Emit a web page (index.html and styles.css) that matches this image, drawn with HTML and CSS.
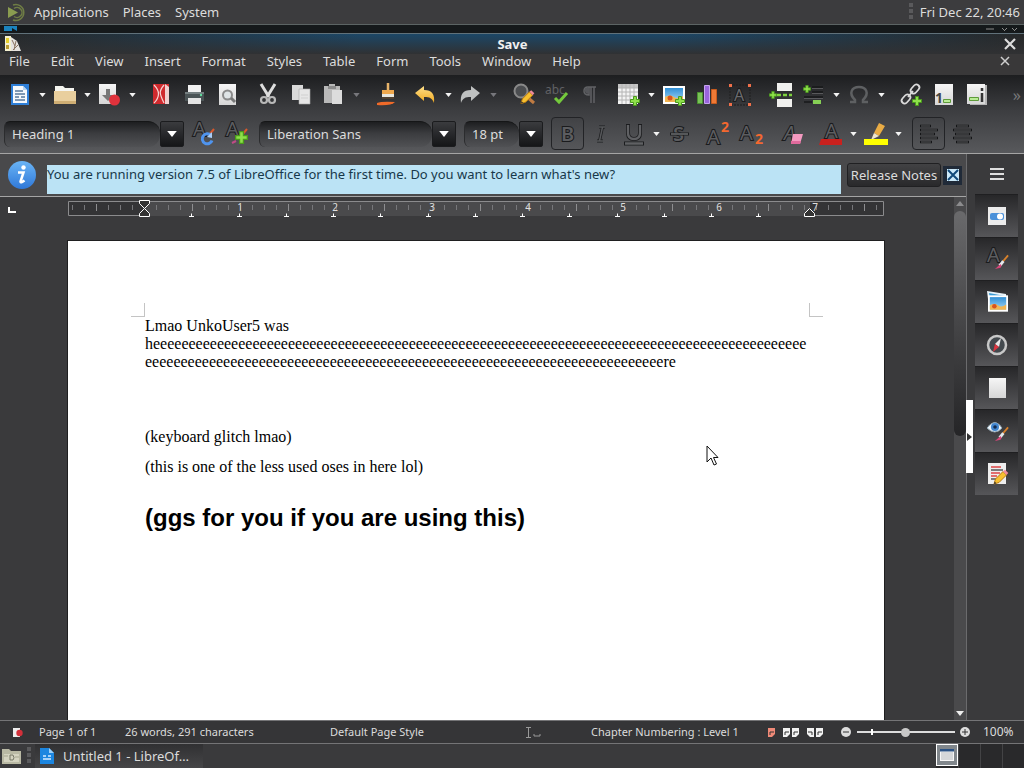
FILE: index.html
```html
<!DOCTYPE html>
<html lang="en">
<head>
<meta charset="utf-8">
<title>Untitled 1 - LibreOffice Writer</title>
<link rel="stylesheet" href="styles.css">
</head>
<body>
<svg class="defs" aria-hidden="true">
  <defs>
    <linearGradient id="paper" x1="0" y1="0" x2="0" y2="1"><stop offset="0" stop-color="#f6f6f6"/><stop offset="1" stop-color="#d6d6d6"/></linearGradient>
    <linearGradient id="gold" x1="0" y1="0" x2="0" y2="1"><stop offset="0" stop-color="#ffe08a"/><stop offset="1" stop-color="#f0a91e"/></linearGradient>
    <linearGradient id="sky" x1="0" y1="0" x2="0" y2="1"><stop offset="0" stop-color="#2f8fd6"/><stop offset="1" stop-color="#a8d8f4"/></linearGradient>
    <linearGradient id="blue" x1="0" y1="0" x2="0" y2="1"><stop offset="0" stop-color="#6ab4f5"/><stop offset="1" stop-color="#2f78d8"/></linearGradient>
  </defs>
  <symbol id="down" viewBox="0 0 8 5"><path d="M0 0h8L4 5z" fill="currentColor"/></symbol>
  <symbol id="plus" viewBox="0 0 10 10"><path d="M3.5.5h3v3h3v3h-3v3h-3v-3h-3v-3h3z" fill="#8ee04a" stroke="#4a9a1c"/></symbol>
  <symbol id="brush" viewBox="0 0 16 16"><path d="M15 1 9 8" stroke="#d9822b" stroke-width="2"/><path d="M10 7 6 12" stroke="#e4e8ec" stroke-width="3"/><path d="M7 10 1 15.500l6-1.500 1-2z" fill="#d8467a"/></symbol>
  <symbol id="pencil" viewBox="0 0 16 16"><path d="M1 15l1.500-5L10 2.500l3.500 3.500L6 13.500z" fill="#f7c030" stroke="#b9790f"/><path d="M10 2.500 12 .8l3.300 3.300L13.500 6z" fill="#f08a9a"/><path d="M1 15l.7-2.500 1.700 1.700z" fill="#333"/></symbol>
  <symbol id="picture" viewBox="0 0 22 18"><path d="M0 0h22v18H0z" fill="#fff"/><path d="M2 2h18v14H2z" fill="url(#sky)"/><path d="M2 11q5-3 9 0t9-1v6H2z" fill="#f2b552"/><circle cx="7" cy="12" r="2.500" fill="#d9541e"/></symbol>
  <symbol id="flag" viewBox="0 0 7 9"><path d="M0 0h7v6L4 9H0z" fill="currentColor"/><path d="M2 4h4M2 4v3" stroke="#333" fill="none"/></symbol>
</svg>

<header class="panel">
  <svg class="logo" viewBox="0 0 22 22"><path d="M4 6v11l10-5.500z" fill="#8a9c50"/><path d="M9 4a8 8 0 1 1 0 15M10 7.500a5 5 0 1 1 0 8" fill="none" stroke="#6f7d45" stroke-width="1.500"/></svg>
  <nav class="panel-menu"><a href="#">Applications</a><a href="#">Places</a><a href="#">System</a></nav>
  <span class="grip"></span>
  <time class="clock">Fri Dec 22, 20:46</time>
</header>

<div class="backstrip">
  <svg class="blue-bit" viewBox="0 0 13 5"><path d="M0 0h13v5L8 2v3H0z" fill="#1b83bd"/></svg>
  <svg class="strip-buttons" viewBox="0 0 32 4"><path d="M0 2h8M16 1l3 3M26 1l3 3M21 1l-2 2M31 1l-2 2" stroke="#8b8b8b" stroke-width="1"/></svg>
</div>
<div class="titlebar">
  <svg class="app" viewBox="0 0 16 16"><path d="M0 0h6v15H0z" fill="#f4f0d0"/><path d="M1 2h3v5H1z" fill="#e7cf2d"/><path d="M1 9h3v4H1z" fill="#b89a30"/><path d="M6 1l6 4 4 10H6z" fill="#e6e3df"/><path d="M7 4l3 6M11 5l-2 9M13 9l-5 5" stroke="#8a7460"/></svg>
  <h1>Save</h1>
  <button class="close" aria-label="Close window"><svg viewBox="0 0 12 12"><path d="M1 1l10 10M11 1 1 11" stroke="#dcdcdc" stroke-width="2.200"/></svg></button>
</div>
<nav class="menubar">
  <button>File</button><button>Edit</button><button>View</button><button>Insert</button><button>Format</button><button>Styles</button><button>Table</button><button>Form</button><button>Tools</button><button>Window</button><button>Help</button>
  <button class="doc-close" aria-label="Close document"><svg viewBox="0 0 10 10"><path d="M1 1l8 8M9 1 1 9" stroke="#cfcfcf" stroke-width="1.500"/></svg></button>
</nav>

<div class="toolbars">
<div class="toolbar" role="toolbar" aria-label="Standard">
  <button class="tool" aria-label="New"><svg viewBox="0 0 24 24"><path d="M3 1h18v21H3z" fill="#2e7fd8"/><path d="M5 3h10l4 4v13H5z" fill="#f4f8fc"/><path d="M15 3v4h4" fill="#b8d4ef"/><path d="M7 8h8M7 11h10M7 14h4M7 17h10M13 14h4" stroke="#56789c" stroke-width="1.500"/></svg></button><button class="drop" aria-label="New options"><svg><use href="#down"/></svg></button>
  <button class="tool" aria-label="Open"><svg viewBox="0 0 24 24"><path d="M2 3h8l2 2h9v5H2z" fill="#f5f5f0"/><path d="M1 8h22v13H1z" fill="#e9cf9e"/><path d="M1 18h22v3H1z" fill="#cfae74"/></svg></button><button class="drop" aria-label="Open options"><svg><use href="#down"/></svg></button>
  <button class="tool" aria-label="Save"><svg viewBox="0 0 24 24"><path d="M1 1h17v20H1z" fill="url(#paper)"/><path d="M8 6h4v6h4l-6 6-6-6h4z" fill="#777"/><circle cx="16.500" cy="17" r="5.500" fill="#e0323c"/></svg></button><button class="drop" aria-label="Save options"><svg><use href="#down"/></svg></button>
  <span class="sep small"></span>
  <button class="tool" aria-label="Export as PDF"><svg viewBox="0 0 24 24"><path d="M4 1h16v20H4z" fill="#d02a2e"/><path d="M16 1l4 3v17h-4z" fill="#f0cfcf"/><path d="M5 2c6 6 6 12 0 18M15 2c-5 6-5 8 0 18" fill="none" stroke="#f4d4d4" stroke-width="1.200"/></svg></button>
  <button class="tool" aria-label="Print"><svg viewBox="0 0 24 24"><path d="M6 2h13v9H6z" fill="#f1f1f1"/><path d="M3 9h19v9H3z" fill="#4a5355"/><path d="M3 9h19v2H3z" fill="#747e80"/><circle cx="19" cy="12" r="1.200" fill="#5fdc9c"/><path d="M6 15h13v6H6z" fill="#e3e3e3"/></svg></button>
  <button class="tool" aria-label="Print preview"><svg viewBox="0 0 24 24"><path d="M4 1h17v21H4z" fill="url(#paper)"/><circle cx="12.500" cy="12" r="4.500" fill="#dfe4e6" stroke="#8b8b8b" stroke-width="2"/><path d="m16 15 4 4" stroke="#777" stroke-width="3"/></svg></button>
  <span class="sep"></span>
  <button class="tool" aria-label="Cut"><svg viewBox="0 0 24 24"><path d="M5 1l8 13M19 1l-8 13" stroke="#dedede" stroke-width="3"/><circle cx="8" cy="17" r="3" fill="none" stroke="#b9b9b9" stroke-width="2.200"/><circle cx="16" cy="17" r="3" fill="none" stroke="#b9b9b9" stroke-width="2.200"/></svg></button>
  <button class="tool" aria-label="Copy"><svg viewBox="0 0 24 24"><path d="M3 2h11v15H3z" fill="#d9d9d9"/><path d="M10 6h11v15H10z" fill="#e6e6e6" stroke="#aaa" stroke-width=".6"/><path d="M12 12h7M12 15h7" stroke="#d0d0d0"/></svg></button>
  <button class="tool" aria-label="Paste"><svg viewBox="0 0 24 24"><path d="M2 3h5V1h6v2h5v17H2z" fill="#b9b9b9"/><path d="M6 3h8v3H6z" fill="#8c8c8c"/><path d="M10 7h10v14H10z" fill="#dcdcdc"/></svg></button><button class="drop dim" aria-label="Paste options"><svg><use href="#down"/></svg></button>
  <span class="sep"></span>
  <button class="tool" aria-label="Clone formatting"><svg viewBox="0 0 24 24"><path d="M13 0v8" stroke="#e8b46a" stroke-width="2.500"/><path d="M7 7h12v5H7z" fill="#efa84e"/><path d="M7 11h12v4H7z" fill="#e8e6df"/><path d="M7 14h12v2H7z" fill="#504030"/><path d="M2 20q5-2 18-1-4 4-18 3z" fill="#ef6a29"/></svg></button>
  <span class="sep small"></span>
  <button class="tool" aria-label="Undo"><svg viewBox="0 0 24 24"><path d="M1 10 10 3v4c8 0 11 4 10 13-2-5-4-6-10-6v4z" fill="url(#gold)"/></svg></button><button class="drop" aria-label="Undo options"><svg><use href="#down"/></svg></button>
  <button class="tool" aria-label="Redo"><svg viewBox="0 0 24 24"><path d="m21 10-9-7v4C4 7 1 11 2 20c2-5 4-6 10-6v4z" fill="#bfc1c1"/></svg></button><button class="drop dim" aria-label="Redo options"><svg><use href="#down"/></svg></button>
  <span class="sep"></span>
  <button class="tool" aria-label="Find and replace"><svg viewBox="0 0 24 24"><circle cx="9" cy="8" r="6.500" fill="#4b4d50" stroke="#898989" stroke-width="2"/><path d="m14 13 8 7" stroke="#c07b42" stroke-width="3"/><use href="#pencil" x="8" y="6" width="15" height="16"/></svg></button>
  <button class="tool" aria-label="Spelling"><svg viewBox="0 0 24 24"><text x="0" y="11" class="abc">abc</text><path d="m10 15 4 4 8-9" fill="none" stroke="#74c93c" stroke-width="3"/></svg></button>
  <button class="tool" aria-label="Formatting marks"><svg viewBox="0 0 24 24"><path d="M18 4H10q-4 0-4 4t5 4V4M13 4v16M16 4v16" fill="none" stroke="#616265" stroke-width="1.500"/><path d="M7 5h4v6q-4 0-4-3z" fill="#55565a"/></svg></button>
  <span class="sep small"></span>
  <button class="tool" aria-label="Insert table"><svg viewBox="0 0 24 24"><path d="M1 1h20v20H1z" fill="#f3f3f3"/><path d="M1 1h20v4H1z" fill="#c4c4c4"/><path d="M1 5h20M1 9h20M1 13h20M1 17h20M5 1v20M9 1v20M13 1v20M17 1v20" stroke="#b4b4b4"/><use href="#plus" x="13" y="13" width="10" height="10"/></svg></button><button class="drop" aria-label="Table size"><svg><use href="#down"/></svg></button>
  <button class="tool" aria-label="Insert image"><svg viewBox="0 0 24 24"><use href="#picture" x="1" y="3" width="22" height="18"/><use href="#plus" x="13" y="13" width="10" height="10"/></svg></button>
  <button class="tool" aria-label="Insert chart"><svg viewBox="0 0 24 24"><path d="M2.500 9.500h5v11h-5z" fill="#79c257" stroke="#4b9430"/><path d="M9.500 2.500h5v18h-5z" fill="#9a66dc" stroke="#c6a4f0"/><path d="M16.500 6.500h5v14h-5z" fill="#ef7a36" stroke="#c85a1c"/></svg></button>
  <button class="tool" aria-label="Insert text box"><svg viewBox="0 0 24 24"><path d="M2 2h20v20H2z" fill="none" stroke="#1f1f1f" stroke-dasharray="2 1"/><path d="M1 1h3v3H1zM20 1h3v3h-3zM1 20h3v3H1zM20 20h3v3h-3z" fill="#f0704a"/><text x="6" y="18" class="glyph mid">A</text></svg></button>
  <span class="sep"></span>
  <button class="tool" aria-label="Page break"><svg viewBox="0 0 24 24"><path d="M8 0h15v8H8zM8 16h15v8H8z" fill="#f0f0ee"/><path d="M8 12h15" stroke="#7fd33f" stroke-width="2.500" stroke-dasharray="4 2"/><use href="#plus" x="0" y="8" width="8" height="8"/></svg></button>
  <button class="tool" aria-label="Insert field"><svg viewBox="0 0 24 24"><path d="M10 4h11M10 9h11M2 14h19M2 19h8" stroke="#17181a" stroke-width="1.500"/><path d="M10 5.500h11M10 10.500h11M2 15.500h19" stroke="#6b6c6f" stroke-width=".7"/><path d="M11 17h8v4h-8z" fill="#86cf55"/><use href="#plus" x="1" y="2" width="8" height="8"/></svg></button><button class="drop" aria-label="Field options"><svg><use href="#down"/></svg></button>
  <button class="tool" aria-label="Special character"><svg viewBox="0 0 24 24"><path d="M3 19h5v-2c-7-7-3-13 4-13s11 6 4 13v2h5" fill="none" stroke="#5e6062" stroke-width="2.500"/></svg></button><button class="drop" aria-label="Character options"><svg><use href="#down"/></svg></button>
  <span class="sep"></span>
  <button class="tool" aria-label="Insert hyperlink"><svg viewBox="0 0 24 24"><g fill="none" stroke="#dadada" stroke-width="1.800"><rect x="1" y="13" width="10" height="6" rx="3" transform="rotate(-48 6 16)"/><rect x="10" y="3" width="10" height="6" rx="3" transform="rotate(-48 15 6)"/><path d="m8 14 5-6"/></g><use href="#plus" x="12" y="13" width="10" height="10"/></svg></button>
  <button class="tool" aria-label="Insert footnote"><svg viewBox="0 0 24 24"><path d="M2 1h18v21H2z" fill="url(#paper)"/><text x="2" y="20" class="one">1</text><path d="M10.500 16.500h7v3h-7z" fill="#b9ec96" stroke="#5f9b3b"/></svg></button>
  <button class="tool" aria-label="Insert endnote"><svg viewBox="0 0 24 24"><path d="M4 2h17v20H4z" fill="#b5b5b5"/><path d="M1 1h18v20H1z" fill="url(#paper)"/><path d="M3.500 14.500h9v3h-9z" fill="#b9ec96" stroke="#5f9b3b"/><path d="M16 5v3M16 10v9" stroke="#333" stroke-width="2.500"/></svg></button>
  <button class="more" aria-label="More tools">»</button>
</div>

<div class="toolbar format" role="toolbar" aria-label="Formatting">
  <div class="combo style"><input aria-label="Paragraph style" value="Heading 1"><button aria-label="Show styles"><svg><use href="#down"/></svg></button></div>
  <button class="tool" aria-label="Update style"><svg viewBox="0 0 24 24"><text x="1" y="14" class="glyph big">A</text><path d="m22 7-5 6" stroke="#d9582b" stroke-width="2"/><path d="M19 13.500a5 5 0 1 0 1 5" fill="none" stroke="#4f94ee" stroke-width="3"/><path d="m15 15 5-5v6z" fill="#a9cdf8"/></svg></button>
  <button class="tool" aria-label="New style"><svg viewBox="0 0 24 24"><text x="1" y="14" class="glyph big">A</text><path d="m22 7-5 6" stroke="#d9582b" stroke-width="2"/><path d="m7 21 4-2" stroke="#c14b86" stroke-width="2"/><use href="#plus" x="10" y="9" width="13" height="13"/></svg></button>
  <span class="sep small"></span>
  <div class="combo font"><input aria-label="Font name" value="Liberation Sans"><button aria-label="Show fonts"><svg><use href="#down"/></svg></button></div>
  <span class="sep"></span>
  <div class="combo size"><input aria-label="Font size" value="18 pt"><button aria-label="Show sizes"><svg><use href="#down"/></svg></button></div>
  <span class="sep"></span>
  <button class="tool on" aria-label="Bold"><svg viewBox="0 0 24 24"><text x="5" y="19" class="glyph bold">B</text></svg></button>
  <button class="tool" aria-label="Italic"><svg viewBox="0 0 24 24"><path d="M10 5h6M8 19h6M13.500 5l-3 14" stroke="#1b1c1e" stroke-width="3"/><path d="M10 5h6M8 19h6M13.500 5l-3 14" stroke="#56575a" stroke-width="1.500"/></svg></button>
  <button class="tool" aria-label="Underline"><svg viewBox="0 0 24 24"><path d="M6 2v9q0 6 6 6t6-6V2M2 21.500h20" fill="none" stroke="#1b1c1e" stroke-width="4"/><path d="M6 3v8q0 6 6 6t6-6V3M3 21.500h18" fill="none" stroke="#5f6063" stroke-width="2.400"/></svg></button><button class="drop" aria-label="Underline options"><svg><use href="#down"/></svg></button>
  <button class="tool" aria-label="Strikethrough"><svg viewBox="0 0 24 24"><text x="6" y="19" class="glyph bold">S</text><path d="M3 12h19" stroke="#1b1c1e" stroke-width="3"/><path d="M4 12h17" stroke="#6b6c6f" stroke-width="1.500"/></svg></button>
  <span class="sep small"></span>
  <button class="tool" aria-label="Superscript"><svg viewBox="0 0 24 24"><text x="1" y="22" class="glyph big">A</text><text x="15" y="10" class="two">2</text></svg></button>
  <button class="tool" aria-label="Subscript"><svg viewBox="0 0 24 24"><text x="1" y="18" class="glyph big">A</text><text x="16" y="22" class="two">2</text></svg></button>
  <span class="sep"></span>
  <button class="tool" aria-label="Clear formatting"><svg viewBox="0 0 24 24"><text x="4" y="18" class="glyph slant">A</text><path d="m13 12h10l-3 10h-9z" fill="#f49ac1"/><path d="m11 19h10l-1 3h-9z" fill="#e06a9c"/></svg></button>
  <span class="sep small"></span>
  <button class="tool" aria-label="Font color"><svg viewBox="0 0 24 24"><text x="6" y="16" class="glyph big">A</text><path d="M2 17h21v6H0z" fill="#c9211e"/></svg></button><button class="drop" aria-label="Font colors"><svg><use href="#down"/></svg></button>
  <button class="tool" aria-label="Highlighting"><svg viewBox="0 0 24 24"><path d="m15 1 6 3-6 10-5-3z" fill="#e9ac45"/><path d="m10 11 5 3-8 4z" fill="#eee4ce"/><path d="M0 17h24v6H0z" fill="#ff0"/></svg></button><button class="drop" aria-label="Highlight colors"><svg><use href="#down"/></svg></button>
  <span class="sep"></span>
  <button class="tool on" aria-label="Align left"><svg viewBox="0 0 24 24"><path d="M3 4h11M3 8h18M3 12h15M3 16h18M3 20h12" stroke="#141517" stroke-width="2.500"/><path d="M4 4h9M4 8h16M4 12h13M4 16h16M4 20h10" stroke="#5b5c5f" stroke-width="1.200"/></svg></button>
  <button class="tool" aria-label="Center"><svg viewBox="0 0 24 24"><path d="M6 4h13M3 8h19M5 12h15M3 16h19M6 20h13" stroke="#141517" stroke-width="2.500"/><path d="M7 4h11M4 8h17M6 12h13M4 16h17M7 20h11" stroke="#5b5c5f" stroke-width="1.200"/></svg></button>
</div>
</div>

<div class="workspace">
  <main class="editor">
    <div class="infobar">
      <svg class="info" viewBox="0 0 28 28"><circle cx="14" cy="14" r="14" fill="url(#blue)"/><circle cx="15.500" cy="6.500" r="2.200" fill="#fff"/><path d="M10 11.500h5.500l-3 9q0 2 4-1" fill="none" stroke="#fff" stroke-width="2.500"/></svg>
      <p>You are running version 7.5 of LibreOffice for the first time. Do you want to learn what's new?</p>
      <button class="notes">Release Notes</button>
      <button class="dismiss" aria-label="Close infobar"><svg viewBox="0 0 12 12"><path d="M0 0h12v12H0z" fill="#cdeafa"/><path d="m1 1 10 10M11 1 1 11" stroke="#124a7a" stroke-width="2"/></svg></button>
    </div>
    <div class="view">
      <div class="canvas">
        <div class="ruler">
          <svg class="tabtype" viewBox="0 0 8 8"><path d="M1 1v5h7" fill="none" stroke="#fff" stroke-width="2"/></svg>
          <svg class="scale" viewBox="0 0 816 20">
            <defs><pattern id="ticks" x="4" width="12" height="20" patternUnits="userSpaceOnUse"><path d="M.5 6v5" stroke="#77777a"/></pattern></defs>
            <path d="M.5 2.500h815v14H.500z" fill="#343436" stroke="#8b8b8d"/>
            <path d="M76 3h666v14H76z" fill="#4a4a4c"/>
            <path d="M1 0h814v20H1z" fill="url(#ticks)"/>
            <path d="M28.500 5v7M124.500 5v7M220.500 5v7M316.500 5v7M412.500 5v7M508.500 5v7M604.500 5v7M700.500 5v7M796.500 5v7" stroke="#8e8e90"/>
            <g class="numbers"><text x="172" y="12">1</text><text x="267" y="12">2</text><text x="364" y="12">3</text><text x="460" y="12">4</text><text x="555" y="12">5</text><text x="651" y="12">6</text><text x="747" y="12">7</text></g>
            <path d="M121 17.500h5m-2.500 0v-3M169 17.500h5m-2.500 0v-3M216 17.500h5m-2.500 0v-3M263 17.500h5m-2.500 0v-3M310 17.500h5m-2.500 0v-3M358 17.500h5m-2.500 0v-3M405 17.500h5m-2.500 0v-3M452 17.500h5m-2.500 0v-3M499 17.500h5m-2.500 0v-3M547 17.500h5m-2.500 0v-3M594 17.500h5m-2.500 0v-3M641 17.500h5m-2.500 0v-3M688 17.500h5m-2.500 0v-3" fill="none" stroke="#fff"/>
            <path d="M71.500 1.500h10v3l-5 5-5-5zM71.500 17.500h10v-3l-5-5-5 5zM736.500 17.500h10v-3l-5-5-5 5z" fill="#333" stroke="#fff"/>
          </svg>
        </div>
        <article class="page">
          <div class="corners"><span class="corner left"></span><span class="corner right"></span></div>
          <p>Lmao UnkoUser5 was h<!--
            -->eeeeeeeeee<!--
            -->eeeeeeeeee<!--
            -->eeeeeeeeee<!--
            -->eeeeeeeeee<!--
            -->eeeeeeeeee<!--
            -->eeeeeeeeee<!--
            -->eeeeeeeeee<!--
            -->eeeeeeeeee<!--
            -->eeeeeeeeee<!--
            -->eeeeeeeeee<!--
            -->eeeeeeeeee<!--
            -->eeeeeeeeee<!--
            -->eeeeeeeeee<!--
            -->eeeeeeeeee<!--
            -->eeeeeeeeee<!--
            -->eeeeeeeeee<!--
            -->eeeeere</p>
          <p><br></p>
          <p>(keyboard glitch lmao)</p>
          <p>(this is one of the less used oses in here lol)</p>
          <h2>(ggs for you if you are using this)</h2>
          <svg class="pointer" viewBox="0 0 13 21"><path d="M1 1v16l4-4 3 7 2.500-1-3-6.500H12z" fill="#fff" stroke="#111"/></svg>
        </article>
      </div>
      <div class="scrollbar"><button aria-label="Scroll up"><svg><use href="#down"/></svg></button><span class="thumb"></span><button aria-label="Scroll down"><svg><use href="#down"/></svg></button></div>
    </div>
  </main>
  <aside class="sidebar">
    <button class="collapse" aria-label="Hide sidebar"><svg viewBox="0 0 5 8"><path d="M0 0v8l5-4z" fill="#333"/></svg></button>
    <button class="burger" aria-label="Sidebar settings"><svg viewBox="0 0 14 14"><path d="M0 2h14M0 7h14M0 12h14" stroke="#dedede" stroke-width="2"/></svg></button>
    <button class="tab" aria-label="Properties"><svg viewBox="0 0 24 24"><path d="M3 3h18v18H3z" fill="#ececec"/><rect x="5" y="9" width="14" height="7" rx="2" fill="#4a90d9"/><circle cx="15" cy="12.500" r="3" fill="#fff"/></svg></button>
    <button class="tab" aria-label="Styles"><svg viewBox="0 0 24 24"><text x="2" y="15" class="glyph big">A</text><use href="#brush" x="9" y="7" width="15" height="16"/></svg></button>
    <button class="tab" aria-label="Gallery"><svg viewBox="0 0 24 24"><path d="m2 1 19 3v5H3z" fill="#e8f2f8"/><path d="m4 3 16 3v3H5z" fill="#3c9bd5"/><use href="#picture" x="3" y="5" width="20" height="17"/></svg></button>
    <button class="tab" aria-label="Navigator"><svg viewBox="0 0 24 24"><circle cx="12" cy="12" r="9" fill="#43494e" stroke="#c8c8c8" stroke-width="2.500"/><path d="m16 5-2 9-4-3z" fill="#e7e7e7"/><path d="m8 19 2-8 4 3z" fill="#dc3540"/></svg></button>
    <button class="tab" aria-label="Page"><svg viewBox="0 0 24 24"><path d="M4 2h17v20H4z" fill="url(#paper)"/></svg></button>
    <button class="tab" aria-label="Style inspector"><svg viewBox="0 0 24 24"><path d="M2 9q8-11 15 0-7 8-15 0z" fill="#eef4f8" stroke="#8ea4b2"/><circle cx="10" cy="8" r="4" fill="#4286cf"/><circle cx="10" cy="8" r="1.800" fill="#142b4e"/><use href="#brush" x="9" y="7" width="15" height="16"/></svg></button>
    <button class="tab" aria-label="Manage changes"><svg viewBox="0 0 24 24"><path d="M3 1h18v21H3z" fill="#eee"/><path d="M6 5h10M6 11h9M6 14h6" stroke="#d44" stroke-width="1.500"/><path d="M6 8h12M6 17h5" stroke="#555" stroke-width="1.500"/><use href="#pencil" x="8" y="7" width="16" height="16"/></svg></button>
  </aside>
</div>

<footer class="status">
  <svg class="modified" viewBox="0 0 10 9"><path d="M0 0h7v9H0z" fill="#eee"/><circle cx="6.500" cy="5" r="3.200" fill="#d3303a"/></svg>
  <span class="pages">Page 1 of 1</span>
  <span class="words">26 words, 291 characters</span>
  <span class="pagestyle">Default Page Style</span>
  <svg class="insert" viewBox="0 0 16 11"><path d="M0 .5h5M0 10.500h5M2.500 0v11M8 7v2h6V7" fill="none" stroke="#999"/></svg>
  <span class="chapter">Chapter Numbering : Level 1</span>
  <div class="views"><button class="red" aria-label="Single page"><svg><use href="#flag"/></svg></button><button aria-label="Multiple pages"><svg><use href="#flag"/></svg><svg><use href="#flag"/></svg></button><button aria-label="Book view"><svg class="flip"><use href="#flag"/></svg><svg><use href="#flag"/></svg></button></div>
  <button class="zoom" aria-label="Zoom out"><svg viewBox="0 0 10 10"><circle cx="5" cy="5" r="5" fill="#ddd"/><path d="M2 5h6" stroke="#333"/></svg></button>
  <input class="slider" type="range" aria-label="Zoom" min="0" max="100" value="49">
  <button class="zoom" aria-label="Zoom in"><svg viewBox="0 0 10 10"><circle cx="5" cy="5" r="5" fill="#ddd"/><path d="M2 5h6M5 2v6" stroke="#333"/></svg></button>
  <span class="percent">100%</span>
</footer>

<div class="taskbar">
  <button class="desktop" aria-label="Show desktop"><svg viewBox="0 0 20 18"><path d="M0 2h7l2 2h10v13H0z" fill="#b9b9a4"/><path d="M2 7h15v8H2z" fill="#d4d3c0"/><path d="M8 8h3q2 3 0 5H8z" fill="none" stroke="#777867"/><path d="M2 9h4M13 10h4" stroke="#a5a58f"/></svg></button>
  <span class="grip"></span>
  <button class="task"><svg viewBox="0 0 14 16"><path d="M0 0h9l5 5v11H0z" fill="#1c86e0"/><path d="M9 0v5h5z" fill="#9bd0fa"/><path d="M3 8h3M8 8h3M3 11h8" stroke="#d5ecff" stroke-width="1.500"/></svg><span>Untitled 1 - LibreOf…</span></button>
  <div class="pager"><button class="current" aria-label="Workspace 1"><svg viewBox="0 0 14 12"><path d="M0 0h14v12H0z" fill="#f6f6f6"/><path d="M1 3h12v8H1z" fill="#d5d7d9"/><path d="M0 0h14v2.500H0z" fill="#2b5284"/></svg></button><button aria-label="Workspace 2"></button><button aria-label="Workspace 3"></button><button aria-label="Workspace 4"></button></div>
</div>
</body>
</html>
```
FILE: styles.css
```css
* { box-sizing: border-box; }
html, body { height: 100%; }
body {
  margin: 0;
  display: flex;
  flex-direction: column;
  overflow: hidden;
  background: #3a3a3c;
  color: #dcdcdc;
  font: 13px/20px "Noto Sans", sans-serif;
}
button { margin: 0; padding: 0; border: 0; background: none; color: inherit; font: inherit; }
input { font: inherit; color: inherit; }
svg { display: block; flex: none; overflow: visible; }
a { color: inherit; text-decoration: none; }
.defs { position: absolute; width: 0; height: 0; }

/* Desktop panel */
.panel { display: flex; align-items: center; height: 25px; flex: none; padding: 0 4px; background: #3c3c3e; border-bottom: 1px solid #5c6464; }
.logo { width: 22px; height: 22px; }
.panel-menu { display: flex; gap: 14px; margin-left: 8px; flex: 1; }
.grip { width: 4px; height: 18px; background: repeating-linear-gradient(#5a5a5c 0 4px, transparent 4px 6px); }
.clock { margin-left: 7px; }

/* Window frame */
.backstrip { display: flex; justify-content: space-between; height: 8px; flex: none; padding: 1px 6px 0 4px; background: #15191b; }
.blue-bit { width: 13px; height: 5px; }
.strip-buttons { width: 32px; height: 6px; }
.titlebar { display: flex; align-items: center; height: 21px; flex: none; padding: 0 8px 0 5px; border-top: 1px solid #60717a; background: linear-gradient(transparent, #303133), linear-gradient(90deg, #262829, #1c4767 35%, #1c4767 65%, #262829); }
.app { width: 16px; height: 16px; }
.titlebar h1 { flex: 1; margin: 0; text-align: center; font-size: 13px; line-height: 20px; color: #f0f0f0; }
.close svg { width: 12px; height: 12px; }
.menubar { display: flex; align-items: center; gap: 21px; height: 21px; flex: none; padding: 0 14px 7px 9px; background: #393839; }
.doc-close { margin-left: auto; }
.doc-close svg { width: 10px; height: 10px; }

/* Toolbars */
.toolbars { flex: none; height: 79px; border-bottom: 1px solid #a5a5a5; background: linear-gradient(#1d1e20, #3c3d40 45%, #58595c); }
.toolbar { display: flex; align-items: center; height: 39px; padding-left: 3px; }
.toolbar.format { padding-left: 4px; }
.tool { display: flex; align-items: center; justify-content: center; width: 33px; height: 33px; flex: none; }
.tool svg { width: 24px; height: 24px; }
.tool.on { border: 1px solid #222326; border-radius: 4px; }
.drop { display: flex; align-items: center; justify-content: center; width: 12px; height: 33px; flex: none; color: #f4f4f4; }
.drop svg { width: 7px; height: 4px; }
.drop.dim { color: #77777c; }
.sep { width: 8px; flex: none; }
.sep.small { width: 6px; }
.more { margin-left: auto; margin-right: 3px; color: #77787a; font-size: 16px; }
.abc { font: 12px "Noto Sans", sans-serif; fill: #606164; }
.glyph { font-family: "Noto Sans", sans-serif; font-size: 16px; fill: #5c5d60; stroke: #1a1b1d; stroke-width: 2px; paint-order: stroke; }
.glyph.mid { fill: #6a6b6e; stroke: #1a1b1d; }
.glyph.big { font-size: 20px; }
.glyph.bold { font-size: 20px; font-weight: 600; }
.glyph.slant { font-size: 20px; font-style: italic; }
.one { font: 700 14px "Noto Sans", sans-serif; fill: #444; }
.two { font: 700 14px "Noto Sans", sans-serif; fill: #f4682f; }
.combo { display: flex; flex: none; height: 26px; }
.combo.style { width: 180px; margin-right: 3px; }
.combo.font { width: 197px; }
.combo.size { width: 79px; }
.combo input { flex: 1; min-width: 0; padding: 0 0 0 7px; border: 0; border-top: 1px solid #151617; border-left: 1px solid #2b2c2e; border-radius: 6px 12px 12px 6px; outline: 0; background: linear-gradient(#1d1e20, #3b3c3f 45%, #505154); }
.combo button { display: flex; align-items: center; justify-content: center; width: 24px; border: 1px solid #1b1c1e; border-radius: 2px; background: linear-gradient(#3a3b3e, #151618); color: #fff; }
.combo button svg { width: 10px; height: 6px; }

/* Workspace */
.workspace { display: flex; flex: 1; min-height: 0; }
.editor { display: flex; flex-direction: column; flex: 1; min-width: 0; border-right: 1px solid #6b6b6d; }
.infobar { display: flex; align-items: center; height: 43px; flex: none; padding: 0 4px 0 8px; border-bottom: 1px solid #a5a5a5; background: #49494b; }
.info { width: 28px; height: 28px; }
.infobar p { flex: 1; height: 29px; margin: 8px 6px 0 11px; background: #bbe3f5; color: #17384a; line-height: 18px; white-space: nowrap; }
.notes { width: 94px; height: 24px; border: 1px solid #202022; border-radius: 3px; background: linear-gradient(#424244, #29292b); }
.dismiss { display: flex; align-items: center; justify-content: center; width: 19px; height: 19px; margin-left: 2px; background: #202a38; }
.dismiss svg { width: 12px; height: 12px; }
.view { display: flex; flex: 1; min-height: 0; }
.canvas { display: flex; flex-direction: column; align-items: center; flex: 1; min-width: 0; padding-right: 2px; overflow: hidden; }
.ruler { position: relative; display: flex; justify-content: center; width: 100%; height: 44px; flex: none; padding-top: 2px; }
.tabtype { position: absolute; left: 8px; top: 9px; width: 8px; height: 8px; }
.scale { width: 816px; height: 20px; }
.numbers { font: 10px "Noto Sans", sans-serif; fill: #dedede; text-anchor: middle; }
.page { position: relative; width: 816px; flex: 1; padding: 62px 73px 0 77px; background: #fff; outline: 1px solid #1f1f20; color: #000; font: 16px/18px "Liberation Serif", serif; }
.page p { margin: 0 0 12px; overflow-wrap: break-word; }
.page p:nth-of-type(2) { margin-bottom: 27px; }
.page h2 { margin: 28px 0 0; font: 700 24px/28px "Liberation Sans", sans-serif; }
.corners { display: flex; justify-content: space-between; margin: 0 -12px 0 -14px; }
.corner { width: 14px; height: 14px; border-bottom: 1px solid #c4c4c4; }
.corner.left { border-right: 1px solid #c4c4c4; }
.corner.right { border-left: 1px solid #c4c4c4; }
.pointer { position: absolute; left: 638px; top: 204px; width: 13px; height: 21px; }
.scrollbar { display: flex; flex-direction: column; width: 12px; flex: none; background: #4a4a4c; }
.scrollbar button { display: flex; align-items: center; justify-content: center; height: 14px; color: #eee; }
.scrollbar button svg { width: 8px; height: 5px; }
.scrollbar button:first-child { color: #8c8c8e; transform: rotate(180deg); }
.scrollbar button:last-child { margin-top: auto; }
.thumb { height: 43%; border-radius: 6px; background: linear-gradient(#6a6a6c, #424244 55%, #252527); }
.sidebar { position: relative; display: flex; flex-direction: column; align-items: flex-end; width: 57px; flex: none; padding-right: 6px; }
.collapse { position: absolute; left: -1px; top: 246px; display: flex; align-items: center; width: 7px; height: 73px; background: #fff; }
.collapse svg { width: 5px; height: 8px; margin-left: 1px; }
.burger { display: flex; align-items: center; justify-content: center; width: 43px; height: 40px; flex: none; }
.burger svg { width: 14px; height: 14px; }
.tab { display: flex; align-items: center; justify-content: center; width: 43px; height: 43px; flex: none; border-top: 1px solid #1f1f21; background: linear-gradient(#272729, #565659); }
.tab svg { width: 24px; height: 24px; }

/* Status bar */
.status { display: flex; align-items: center; height: 24px; flex: none; padding: 0 9px 0 13px; border-top: 1px solid #747476; border-bottom: 1px solid #747476; background: #353537; font-size: 11px; }
.modified { width: 10px; height: 9px; }
.pages { width: 86px; margin-left: 16px; }
.words { width: 205px; }
.pagestyle { width: 196px; }
.insert { width: 16px; height: 11px; }
.chapter { margin-left: 49px; flex: 1; white-space: nowrap; }
.views { display: flex; gap: 8px; margin-right: 18px; color: #f2f2f2; }
.views button { display: flex; gap: 2px; }
.views svg { width: 7px; height: 9px; }
.views .red { color: #f08a78; }
.flip { transform: scaleX(-1); }
.zoom svg { width: 10px; height: 10px; }
.slider { appearance: none; width: 98px; height: 10px; margin: 0 5px 0 6px; background: linear-gradient(#fff, #fff) 14px 50% / 2px 6px no-repeat, linear-gradient(#ddd, #ddd) 0 50% / 100% 2px no-repeat; }
.slider::-webkit-slider-thumb { appearance: none; width: 9px; height: 9px; border-radius: 50%; background: #c8c8c8; }
.percent { margin-left: 13px; width: 32px; font-size: 12px; }

/* Taskbar */
.taskbar { display: flex; align-items: center; height: 24px; flex: none; background: #3a3a3c; }
.desktop { margin: 0 5px 0 2px; }
.desktop svg { width: 20px; height: 18px; }
.task { display: flex; align-items: center; gap: 9px; width: 168px; height: 24px; margin-left: 4px; padding-left: 5px; background: linear-gradient(#303032, #464648); white-space: nowrap; }
.task svg { width: 14px; height: 16px; }
.pager { display: flex; margin-left: auto; background: #29292b; }
.pager button { width: 22px; height: 24px; border-left: 1px solid #434345; }
.pager .current { display: flex; align-items: center; justify-content: center; height: 22px; border: 1px solid #fff; background: #81878c; }
.pager .current svg { width: 14px; height: 12px; }
```
